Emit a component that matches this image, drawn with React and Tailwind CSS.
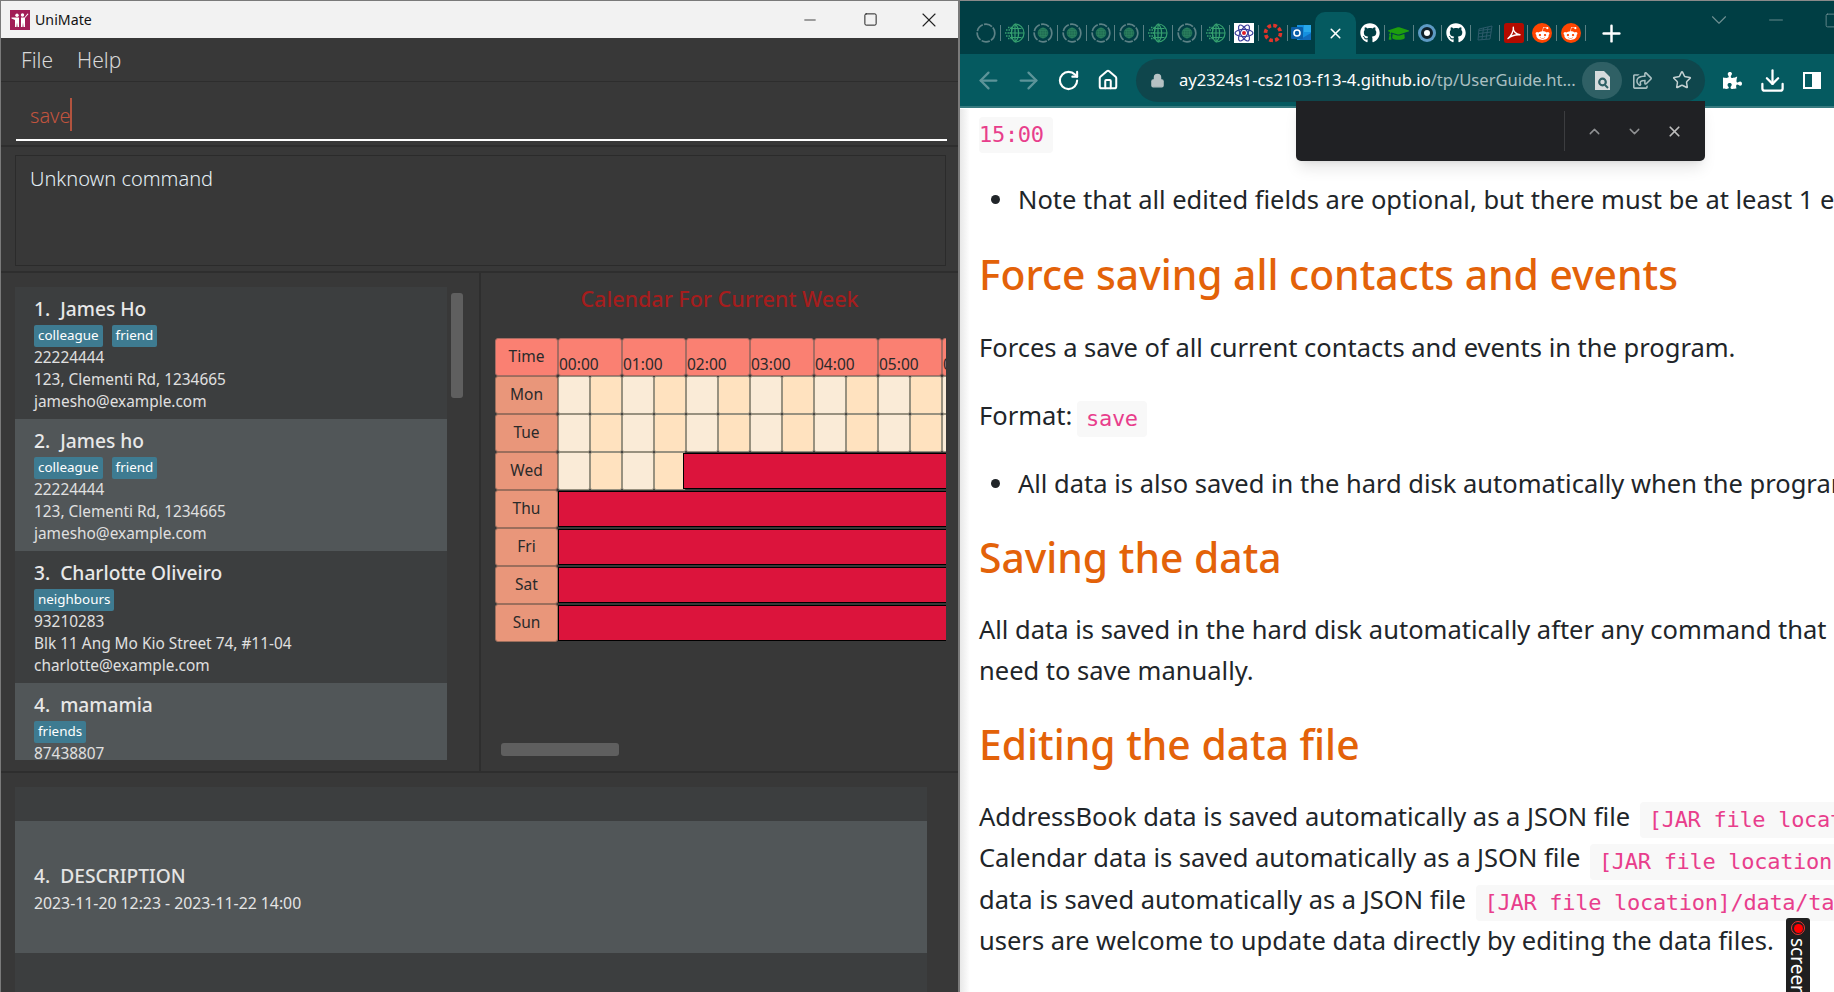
import { ArrowLeft, ArrowRight, RotateCw, Home, Lock, Star, Download, ChevronUp, ChevronDown, X, Minus, Square, Plus } from 'lucide-react';
import { FaGithub, FaRedditAlien, FaGraduationCap, FaRegShareSquare, FaPuzzlePiece } from 'react-icons/fa';

const contacts = [
  { name: '1.  James Ho', tags: ['colleague', 'friend'], phone: '22224444', addr: '123, Clementi Rd, 1234665', email: 'jamesho@example.com' },
  { name: '2.  James ho', tags: ['colleague', 'friend'], phone: '22224444', addr: '123, Clementi Rd, 1234665', email: 'jamesho@example.com' },
  { name: '3.  Charlotte Oliveiro', tags: ['neighbours'], phone: '93210283', addr: 'Blk 11 Ang Mo Kio Street 74, #11-04', email: 'charlotte@example.com' },
  { name: '4.  mamamia', tags: ['friends'], phone: '87438807', addr: '', email: '' },
];

const hours = ['00:00', '01:00', '02:00', '03:00', '04:00', '05:00', '06:00'];

function ContactCard({ c, i }) {
  return (
    <div className={`h-[132px] shrink-0 pl-[19px] pt-[9px] text-[15.4px] leading-[22px] text-[#e0e0e0] ${i % 2 ? 'bg-[#515658]' : 'bg-[#3c3e3f]'}`}>
      <div className="text-[19.2px] leading-[26px] font-medium text-[#e8e8e8] whitespace-pre">{c.name}</div>
      <div className="flex gap-[9px] mt-[3px]">
        {c.tags.map((t) => (
          <span key={t} className="h-[22px] px-[4px] rounded-[2px] bg-[#3e7b91] text-white text-[13.4px] leading-[21px]">{t}</span>
        ))}
      </div>
      <div>{c.phone}</div>
      <div>{c.addr}</div>
      <div>{c.email}</div>
    </div>
  );
}

function DayRow({ day, free, full }) {
  const cells = [];
  for (let i = 0; i < free; i++) {
    cells.push(<div key={i} className={`w-[32px] shrink-0 border border-[#98917f] rounded-[2px] ${i % 2 ? 'bg-[#ffe2bf]' : 'bg-[#faebd7]'}`} />);
  }
  return (
    <div className="flex h-[38px]">
      <div className="w-[63px] shrink-0 flex items-center justify-center bg-[#e9967a] border border-[#9c6e5c] rounded-[3px] text-[15.5px] text-[#2a2a2a]">{day}</div>
      {cells}
      {full && <div className={`w-[400px] shrink-0 bg-[#dc143c] border border-black my-[1px] ${free ? '-ml-[3px]' : ''}`} />}
    </div>
  );
}

function Calendar() {
  return (
    <div className="mt-[23px] ml-[14px] w-[451px] overflow-hidden">
      <div className="flex h-[38px]">
        <div className="w-[63px] shrink-0 flex items-center justify-center bg-[#fa8072] border border-[#a86b62] rounded-[3px] text-[15.5px] text-[#2a2a2a]">Time</div>
        {hours.map((h) => (
          <div key={h} className="w-[64px] shrink-0 flex items-end bg-[#fa8072] border border-[#a86b62] rounded-[3px] text-[15.5px] leading-[21px] text-[#2a2a2a]">{h}</div>
        ))}
      </div>
      <DayRow day="Mon" free={14} />
      <DayRow day="Tue" free={14} />
      <DayRow day="Wed" free={4} full />
      <DayRow day="Thu" free={0} full />
      <DayRow day="Fri" free={0} full />
      <DayRow day="Sat" free={0} full />
      <DayRow day="Sun" free={0} full />
    </div>
  );
}

function UniMate() {
  return (
    <div className="w-[960px] shrink-0 h-full flex flex-col bg-[#383838] border-l border-t border-r-2 border-[#7a7a7a]">
      {/* Title bar */}
      <div className="h-[37px] shrink-0 bg-[#f2f2f2] flex items-center pl-[9px] text-[14.2px] text-[#111]">
        <svg width="20" height="20" viewBox="0 0 20 20" className="mr-[5px]">
          <rect width="20" height="20" fill="#a21d57" />
          <circle cx="7" cy="5.2" r="1.7" fill="#fff" />
          <circle cx="12.5" cy="5" r="1.7" fill="#fff" />
          <path d="M1.5 7.5H9V17H7.5L7 12.5 6.5 17H5V10L1.5 8.5z" fill="#fff" />
          <path d="M18.5 4L15 8V17H13.5L13 12.5 12.5 17H11V7.5H14.5L17.5 3.5z" fill="#fff" />
        </svg>
        UniMate
        <div className="ml-auto flex items-center text-[#222]">
          <div className="w-[60px] flex justify-center"><Minus size={18} strokeWidth={1.1} /></div>
          <div className="w-[60px] flex justify-center"><Square size={15} strokeWidth={1.6} /></div>
          <div className="w-[58px] flex justify-center"><X size={24} strokeWidth={1.1} /></div>
        </div>
      </div>
      {/* Menu */}
      <div className="h-[44px] shrink-0 flex items-center pl-[20px] pt-[2px] gap-[24px] text-[21px] font-light text-[#d8d8d8] border-b border-[#2d2d2d]">
        <span>File</span>
        <span>Help</span>
      </div>
      {/* Command box */}
      <div className="h-[65px] shrink-0 pl-[15px] pr-[11px] border-b-2 border-[#2e2e2e]">
        <div className="h-[59px] border-b-[2px] border-white pl-[14px] pt-[8px] flex items-center text-[20px] font-light text-[#c2543e]">
          <span className="translate-y-[1px]">save</span><span className="w-[2px] h-[33px] bg-[#b2533e] -ml-[1px]" />
        </div>
      </div>
      {/* Result box */}
      <div className="h-[126px] shrink-0 pl-[14px] pr-[12px] pt-[8px] border-b-2 border-[#2e2e2e]">
        <div className="h-[111px] border border-[#2b2b2b] pl-[14px] pt-[8px] text-[20px] font-light text-[#e4eef5]">Unknown command</div>
      </div>
      {/* Contacts and calendar */}
      <div className="h-[500px] shrink-0 flex border-b-2 border-[#2e2e2e]">
        <div className="w-[480px] shrink-0 flex pl-[14px] pt-[14px] border-r-2 border-[#2e2e2e]">
          <div className="w-[432px] h-[473px] overflow-hidden flex flex-col">
            {contacts.map((c, i) => <ContactCard key={i} c={c} i={i} />)}
          </div>
          <div className="ml-[4px] mt-[6px] w-[12px] h-[105px] rounded-[3px] bg-[#5f5f5f]" />
        </div>
        <div className="flex-1 min-w-0 flex flex-col">
          <div className="mt-[10px] text-center text-[21.5px] leading-[32px] font-medium text-[#a51d1d]">Calendar For Current Week</div>
          <Calendar />
          <div className="ml-[20px] mt-[101px] w-[118px] h-[13px] rounded-[3px] bg-[#5f5f5f]" />
        </div>
      </div>
      {/* Events */}
      <div className="flex-1 min-h-0 pl-[14px] pt-[14px] overflow-hidden">
        <div className="w-[912px] flex flex-col">
          <div className="h-[34px] bg-[#3c3e3f]" />
          <div className="h-[132px] bg-[#515658] pl-[19px] pt-[3px] flex flex-col justify-center text-[#e4e4e4]">
            <div className="text-[19.2px] leading-[26px] font-medium whitespace-pre">{'4.  DESCRIPTION'}</div>
            <div className="text-[15.8px] leading-[22px] mt-[3px]">2023-11-20 12:23 - 2023-11-22 14:00</div>
          </div>
          <div className="h-[60px] bg-[#3c3e3f]" />
        </div>
      </div>
    </div>
  );
}

function Sep() {
  return <span className="w-px h-[16px] bg-[#5a8084] shrink-0" />;
}

function Slot({ children }) {
  return <div className="w-[27.7px] h-[20px] shrink-0 flex items-center justify-center">{children}</div>;
}

// lattice globe favicon, right half drawn and left half fading to dots
function Globe() {
  return (
    <svg width="21" height="20" viewBox="0 0 21 20" fill="none" stroke="#35a06f" strokeWidth="1.2">
      <path d="M11 1a9 9 0 0 1 0 18" />
      <path d="M11 1v18M11 1c3 2.5 3.6 6 3.6 9s-.6 6.500-3.600 9M6 5.500h11.500M5 10h15M6 14.500h11.500" />
      <path d="M11 1C8 3 7.500 6 7.500 10s.5 7 3.500 9" />
      <path d="M2 7h7M1 10h7M2 13h7M4 4.500h5M4 15.500h5" strokeWidth="1.6" strokeDasharray="1.500 1" />
    </svg>
  );
}

function RingGlobe({ dim }) {
  return (
    <svg width="20" height="20" viewBox="0 0 20 20" fill="none">
      <circle cx="10" cy="10" r="8.800" stroke="#5d8286" strokeWidth="1.700" strokeDasharray="8.500 1.300" />
      {!dim && (
        <g stroke="#2f8a63" strokeWidth="1" transform="translate(4.500 4.500) scale(.55)">
          <circle cx="10" cy="10" r="9" fill="#1f6a52" />
          <ellipse cx="10" cy="10" rx="4.500" ry="9" />
          <path d="M1 10h18M2.500 5.500h15M2.500 14.500h15M10 1v18" />
        </g>
      )}
    </svg>
  );
}

function AtomIcon() {
  return (
    <svg width="20" height="20" viewBox="0 0 20 20" fill="none">
      <rect width="20" height="20" fill="#fff" />
      <g stroke="#3b3f9c" strokeWidth="1.200">
        <ellipse cx="10" cy="10" rx="9" ry="3.600" />
        <ellipse cx="10" cy="10" rx="9" ry="3.600" transform="rotate(60 10 10)" />
        <ellipse cx="10" cy="10" rx="9" ry="3.600" transform="rotate(120 10 10)" />
      </g>
      <circle cx="10" cy="10" r="2" fill="#e0202a" />
    </svg>
  );
}

function Reddit() {
  return (
    <div className="w-[20px] h-[20px] rounded-full bg-[#ff4500] flex items-center justify-center">
      <FaRedditAlien size={15} color="#fff" />
    </div>
  );
}

function TabStrip() {
  const globes = ['dim', 'globe', 'ring', 'ring', 'ring', 'ring', 'globe', 'ring', 'globe'];
  return (
    <div className="h-[53px] shrink-0 bg-[#003e44] flex items-center relative pl-[12px]">
      <div className="flex items-center mt-[11px]">
        {globes.map((g, i) => (
          <div key={i} className="flex items-center">
            <Slot>{g === 'globe' ? <Globe /> : <RingGlobe dim={g === 'dim'} />}</Slot>
            <Sep />
          </div>
        ))}
        <Slot><AtomIcon /></Slot>
        <Sep />
        <Slot>
          <svg width="20" height="20" viewBox="0 0 20 20" fill="none">
            <circle cx="10" cy="10" r="7.500" stroke="#e0352b" strokeWidth="3.600" strokeDasharray="3.700 2.190" />
          </svg>
        </Slot>
        <Sep />
        <Slot>
          <svg width="20" height="20" viewBox="0 0 20 20">
            <rect x="6" y="2" width="14" height="15" fill="#1490df" />
            <rect x="13" y="2" width="7" height="7" fill="#28a8ea" />
            <path d="M8 17l12-7v7z" fill="#0f6cbd" />
            <rect x="0" y="4" width="12" height="12" rx="1" fill="#0a5fa8" />
            <circle cx="6" cy="10" r="3" fill="none" stroke="#fff" strokeWidth="1.600" />
          </svg>
        </Slot>
        {/* active tab */}
        <div className="w-[41px] h-[42px] shrink-0 bg-[#055a60] rounded-t-[10px] flex items-center justify-center">
          <X size={17} color="#fff" strokeWidth={2.2} />
        </div>
        <Slot><FaGithub size={20} color="#fff" /></Slot>
        <Sep />
        <Slot><FaGraduationCap size={21} color="#1e9e0e" /></Slot>
        <Sep />
        <Slot>
          <div className="relative w-[18px] h-[18px] rounded-full bg-[#5d9ac4] flex items-center justify-center">
            <div className="w-[12px] h-[12px] rounded-full border-[3px] border-[#10202a] bg-white" />
          </div>
        </Slot>
        <Sep />
        <Slot><FaGithub size={20} color="#fff" /></Slot>
        <Sep />
        <Slot>
          <svg width="20" height="20" viewBox="0 0 20 20" fill="none" stroke="#2c5a6a" strokeWidth="1">
            <path d="M4 6l13-3-2 13-12 1zM8.500 5l-1.500 11.500M13 4l-2 12.300M3.700 10.500l12.300-1.500M3.300 14l12.200-1.500M4 7.500l12.700-1.500" />
          </svg>
        </Slot>
        <Sep />
        <Slot>
          <svg width="20" height="20" viewBox="0 0 20 20" fill="none">
            <rect width="20" height="20" rx="2.500" fill="#b30b00" />
            <path d="M4 15.500C7 13 10 8 9.300 4.200 8.700 8 12 11.500 16 11.800 12 11.500 7 13 4 15.500z" stroke="#fff" strokeWidth="1.400" strokeLinejoin="round" />
          </svg>
        </Slot>
        <Sep />
        <Slot><Reddit /></Slot>
        <Sep />
        <Slot><Reddit /></Slot>
        <Sep />
        <Plus size={27} color="#fff" strokeWidth={2.2} className="ml-[12px]" />
      </div>
      <div className="absolute right-[-7px] top-[6px] flex items-center text-[#6f9093]">
        <ChevronDown size={26} strokeWidth={1} className="mr-[33px]" />
        <Minus size={22} strokeWidth={1} className="mr-[37px]" />
        <Square size={17} strokeWidth={1.2} />
      </div>
    </div>
  );
}

function ToolBtn({ children }) {
  return <div className="w-[40px] h-[40px] shrink-0 flex items-center justify-center">{children}</div>;
}

function Toolbar() {
  return (
    <div className="h-[54px] shrink-0 bg-[#055a60] border-b-[2px] border-[#377a7f] flex items-center pl-[8px]">
      <ToolBtn><ArrowLeft size={27} color="#5d9499" strokeWidth={2} /></ToolBtn>
      <ToolBtn><ArrowRight size={27} color="#5d9499" strokeWidth={2} /></ToolBtn>
      <ToolBtn><RotateCw size={23} color="#fff" strokeWidth={2.2} /></ToolBtn>
      <ToolBtn><Home size={22} color="#fff" strokeWidth={2.2} /></ToolBtn>
      <div className="ml-[8px] w-[569px] h-[43px] shrink-0 rounded-full bg-[#0f464c] flex items-center pl-[14px]">
        <Lock size={15} color="#b6c2c4" fill="#b6c2c4" className="shrink-0" />
        <div className="ml-[14px] text-[16.6px] text-white whitespace-nowrap">ay2324s1-cs2103-f13-4.github.io<span className="text-[#a9bfc1]">/tp/UserGuide.ht...</span></div>
        <div className="ml-auto mr-[3px] flex items-center shrink-0">
          <div className="w-[40px] h-[37px] rounded-full bg-[#2f6065] flex items-center justify-center">
            <svg width="16" height="19" viewBox="0 0 16 19">
              <path d="M1 0h9l6 6v13H1z" fill="#d6dbdc" />
              <circle cx="8.500" cy="11" r="3.600" fill="#2f6065" stroke="#2f6065" strokeWidth="1.600" />
              <circle cx="8.500" cy="11" r="2.200" fill="#d6dbdc" />
              <path d="M11 14l3 3" stroke="#2f6065" strokeWidth="2" />
            </svg>
          </div>
          <ToolBtn><FaRegShareSquare size={19} color="#a9bfc1" /></ToolBtn>
          <ToolBtn><Star size={20} color="#c4d1d2" strokeWidth={1.8} /></ToolBtn>
        </div>
      </div>
      <div className="ml-[7px] flex">
        <ToolBtn><FaPuzzlePiece size={19} color="#fff" /></ToolBtn>
        <ToolBtn><Download size={27} color="#fff" strokeWidth={2} /></ToolBtn>
        <ToolBtn>
          <div className="w-[18px] h-[17px] border-[2.5px] border-white flex justify-end"><div className="w-[7px] bg-white" /></div>
        </ToolBtn>
      </div>
    </div>
  );
}

function Code({ children, className = '' }) {
  return (
    <code className={`inline-block translate-y-[1px] bg-[#f8f8f8] rounded-[4px] px-[9px] text-[22px] tracking-[-0.3px] leading-[36px] align-middle text-[#e83e8c] ${className}`} style={{ fontFamily: '"DejaVu Sans Mono", monospace' }}>{children}</code>
  );
}

function Line({ children, className = '' }) {
  return <div className={`text-[25.5px] leading-[41px] whitespace-nowrap text-[#212529] ${className}`}>{children}</div>;
}

function Heading({ children, className = '' }) {
  return <div className={`text-[40.8px] leading-[50px] font-medium whitespace-nowrap text-[#e36209] ${className}`}>{children}</div>;
}

function Bullet({ children, className = '' }) {
  return (
    <div className={`flex items-center pl-[12px] ${className}`}>
      <span className="w-[9px] h-[9px] rounded-full bg-[#212529] mr-[18px] shrink-0" />
      <Line>{children}</Line>
    </div>
  );
}

function Guide() {
  return (
    <div className="flex-1 min-h-0 bg-white overflow-hidden pl-[19px] pt-[8px]">
      <Code className="!pr-[9px] !pl-0">15:00</Code>
      <Bullet className="mt-[27px]">Note that all edited fields are optional, but there must be at least 1 edited field.</Bullet>
      <Heading className="mt-[29px]">Force saving all contacts and events</Heading>
      <Line className="mt-[28px]">Forces a save of all current contacts and events in the program.</Line>
      <Line className="mt-[27px]">Format: <Code className="-ml-[2px]">save</Code></Line>
      <Bullet className="mt-[27px]">All data is also saved in the hard disk automatically when the program exits.</Bullet>
      <Heading className="mt-[28px]">Saving the data</Heading>
      <Line className="mt-[27px]">All data is saved in the hard disk automatically after any command that changes the data.</Line>
      <Line>need to save manually.</Line>
      <Heading className="mt-[28px]">Editing the data file</Heading>
      <Line className="mt-[27px]">AddressBook data is saved automatically as a JSON file <Code className="ml-[3px]">[JAR file location]/data/addressbook.json</Code></Line>
      <Line>Calendar data is saved automatically as a JSON file <Code className="ml-[3px]">[JAR file location]/data/calendar.json</Code></Line>
      <Line>data is saved automatically as a JSON file <Code className="ml-[3px]">[JAR file location]/data/tasklist.json</Code></Line>
      <Line>users are welcome to update data directly by editing the data files.</Line>
    </div>
  );
}

function Browser() {
  return (
    <div className="flex-1 min-w-0 h-full flex flex-col relative border-t border-[#8a8a8a] overflow-hidden">
      <TabStrip />
      <Toolbar />
      <Guide />
      {/* window shadow over the page */}
      <div className="absolute left-0 top-[108px] bottom-0 w-[10px] bg-gradient-to-r from-[#e8e8e8] to-transparent" />
      {/* find bar */}
      <div className="absolute left-[336px] top-[100px] w-[409px] h-[60px] bg-[#202124] rounded-b-[5px] shadow-lg flex items-center text-[#8f9193]">
        <div className="ml-[268px] w-px h-[40px] bg-[#3c3d40]" />
        <ChevronUp size={17} strokeWidth={2} className="ml-[21px]" />
        <ChevronDown size={17} strokeWidth={2} className="ml-[23px]" />
        <X size={17} color="#bdbdbd" strokeWidth={2.4} className="ml-[23px]" />
      </div>
      {/* screen recorder tab */}
      <div className="absolute left-[826px] top-[917px] w-[24px] h-[80px] bg-[#1f1f1f] rounded-t-[3px] flex flex-col items-center pt-[3px]">
        <div className="w-[14px] h-[14px] shrink-0 rounded-full border border-[#e33] flex items-center justify-center"><div className="w-[9px] h-[9px] rounded-full bg-[#f00]" /></div>
        <span className="mt-[3px] text-[19px] leading-[24px] text-white [writing-mode:vertical-rl]">screen</span>
      </div>
    </div>
  );
}

export default function App() {
  return (
    <div className="w-[1834px] h-[992px] flex overflow-hidden" style={{ fontFamily: '"Noto Sans", sans-serif' }}>
      <UniMate />
      <Browser />
    </div>
  );
}
